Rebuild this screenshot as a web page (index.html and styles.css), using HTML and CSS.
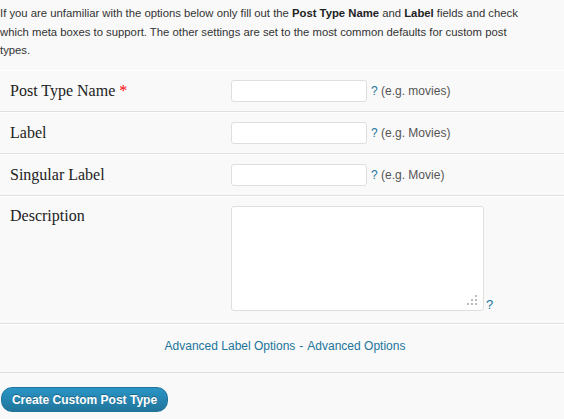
FILE: index.html
```html
<!DOCTYPE html>
<html>
<head>
<meta charset="utf-8">
<link rel="stylesheet" href="styles.css">
</head>
<body>
<p class="intro">If you are unfamiliar with the options below only fill out the <strong>Post Type Name</strong> and <strong>Label</strong> fields and check which meta boxes to support. The other settings are set to the most common defaults for custom post types.</p>
<div class="form-table">
  <div class="row">
    <div class="th">Post Type Name <span class="req">*</span></div>
    <div class="td"><input class="text" type="text"><span class="help"><a class="q">?</a> (e.g. movies)</span></div>
  </div>
  <div class="row">
    <div class="th">Label</div>
    <div class="td"><input class="text" type="text"><span class="help"><a class="q">?</a> (e.g. Movies)</span></div>
  </div>
  <div class="row">
    <div class="th">Singular Label</div>
    <div class="td"><input class="text" type="text"><span class="help"><a class="q">?</a> (e.g. Movie)</span></div>
  </div>
  <div class="row row-desc">
    <div class="th">Description</div>
    <div class="td td-desc">
      <div class="desc-wrap">
        <textarea class="desc"></textarea>
        <svg class="grip" width="12" height="10" viewBox="0 0 12 10">
          <rect x="9" y="0" width="2" height="2" fill="#bbb"/>
          <rect x="5" y="4" width="2" height="2" fill="#bbb"/>
          <rect x="9" y="4" width="2" height="2" fill="#bbb"/>
          <rect x="1" y="8" width="2" height="2" fill="#bbb"/>
          <rect x="5" y="8" width="2" height="2" fill="#bbb"/>
          <rect x="9" y="8" width="2" height="2" fill="#bbb"/>
        </svg>
      </div>
      <a class="q q-desc">?</a>
    </div>
  </div>
  <div class="row row-links">
    <a class="link">Advanced Label Options</a> - <a class="link">Advanced Options</a>
  </div>
</div>
<div class="submit">
  <button class="button-primary" type="button">Create Custom Post Type</button>
</div>
</body>
</html>
```
FILE: styles.css
```css
html, body {
  margin: 0;
  padding: 0;
  background: #f9f9f9;
}
body {
  font-family: "Liberation Sans", Arial, sans-serif;
  font-size: 12px;
  color: #333;
  width: 564px;
}
.intro {
  margin: 0;
  padding: 4px 0 0 0;
  width: 530px;
  font-size: 11.3px;
  line-height: 18.5px;
  height: 70px;
  box-sizing: border-box;
}
.intro strong {
  color: #222;
}
.row {
  display: grid;
  grid-template-columns: 231px 1fr;
  border-top: 1px solid #fff;
  border-bottom: 1px solid #dfdfdf;
}
.th {
  padding: 0 0 0 10px;
  display: flex;
  align-items: center;
  font-family: "Liberation Serif", Georgia, serif;
  font-size: 16px;
  color: #222;
  height: 40px;
}
.req {
  color: #f00;
  margin-left: 4px;
}
.td {
  display: flex;
  align-items: center;
  height: 40px;
}
.text {
  width: 136px;
  height: 22px;
  box-sizing: border-box;
  border: 1px solid #dfdfdf;
  border-radius: 3px;
  background: #fff;
  margin: 0;
  padding: 0 3px;
}
.help {
  margin-left: 4px;
  color: #555;
  font-size: 12px;
}
.q {
  color: #21759b;
}
.row-desc .th {
  align-items: flex-start;
  height: auto;
  padding-top: 9px;
  line-height: 20px;
}
.td-desc {
  height: auto;
  align-items: flex-end;
  padding: 9px 0 12px 0;
}
.desc-wrap {
  position: relative;
}
.desc {
  width: 253px;
  height: 105px;
  box-sizing: border-box;
  border: 1px solid #dfdfdf;
  border-radius: 3px;
  background: #fff;
  margin: 0;
  resize: none;
  display: block;
}
.grip {
  position: absolute;
  right: 6px;
  bottom: 6px;
}
.q-desc {
  margin-left: 2px;
  font-size: 13px;
  line-height: 13px;
  margin-bottom: 0;
}
.row-links {
  display: flex;
  justify-content: center;
  align-items: flex-start;
  height: 49px;
  box-sizing: border-box;
  padding: 14px 0 0 6px;
  color: #21759b;
  gap: 4px;
}
.link {
  color: #21759b;
}
.submit {
  padding: 14px 0 0 1px;
}
.button-primary {
  display: block;
  font-family: "Liberation Sans", Arial, sans-serif;
  font-size: 12px;
  font-weight: bold;
  color: #fff;
  text-shadow: 0 -1px 0 rgba(0,0,0,0.3);
  background: linear-gradient(to bottom, #2a95c5, #21759b);
  border: 1px solid #21759b;
  border-radius: 11px;
  height: 25px;
  width: 167px;
  padding: 0;
  margin: 0;
  cursor: pointer;
}
```
